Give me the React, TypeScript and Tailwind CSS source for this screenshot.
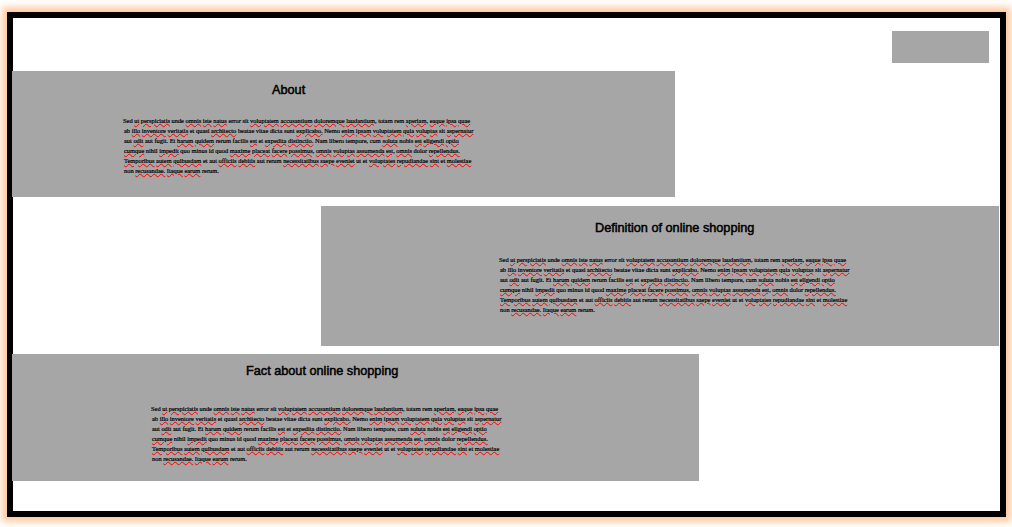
const lines = [
  "Sed ~ut ~perspiciatis unde ~omnis ~iste ~natus error sit ~voluptatem ~accusantium ~doloremque ~laudantium, totam rem ~aperiam, ~eaque ~ipsa ~quae",
  "ab ~illo ~inventore ~veritatis et quasi ~architecto beatae vitae dicta sunt ~explicabo. Nemo ~enim ~ipsam ~voluptatem ~quia ~voluptas sit ~aspernatur",
  "aut ~odit aut fugit. Et ~harum ~quidem rerum facilis ~est et ~expedita ~distinctio. Nam libero tempore, cum ~soluta nobis ~est ~eligendi ~optio",
  "~cumque nihil ~impedit quo minus id quod ~maxime ~placeat ~facere ~possimus, ~omnis ~voluptas ~assumenda ~est, ~omnis dolor ~repellendus.",
  "~Temporibus ~autem ~quibusdam et aut ~officiis ~debitis aut rerum ~necessitatibus ~saepe ~eveniet ut et ~voluptates ~repudiandae ~sint et ~molestiae",
  "non ~recusandae. ~Itaque ~earum rerum.",
];

function Paragraph() {
  return (
    <div className="w-[360px] font-['Liberation_Serif',serif] text-[6.4px] leading-[10px] text-black [-webkit-text-stroke:0.2px_black]">
      {lines.map((line, i) => (
        <p key={i} className={i === 0 ? "whitespace-nowrap" : "whitespace-nowrap pl-px"}>
          {line.split(" ").map((word, j) => (
            <span key={j}>
              {word.startsWith("~") ? (
                <span className="underline decoration-wavy decoration-[#ff0000] decoration-1 underline-offset-0">
                  {word.slice(1)}
                </span>
              ) : (
                word
              )}{" "}
            </span>
          ))}
        </p>
      ))}
    </div>
  );
}

function Title({ children }: { children: string }) {
  return (
    <h2 className="font-['Liberation_Sans',sans-serif] text-[12.7px] leading-[16px] font-normal text-black [-webkit-text-stroke:0.5px_black]">
      {children}
    </h2>
  );
}

export default function App() {
  return (
    <div className="h-[527px] w-[1012px] overflow-hidden bg-white pl-[7px] pt-[12px]">
      <div className="h-[505px] w-[999px] border-[6px] border-black bg-white shadow-[0_0_7px_5px_#ffc9a0]">
        <div className="-ml-px flex flex-col">
          <div className="flex justify-end pr-[11px] pt-[13px]">
            <div className="h-[32px] w-[97px] bg-[#a6a6a6]" />
          </div>
          <section className="mt-[8px] h-[126px] w-[663px] bg-[#a6a6a6] pt-[11px]">
            <div className="ml-[260px]">
              <Title>About</Title>
            </div>
            <div className="ml-[111px] mt-[18px]">
              <Paragraph />
            </div>
          </section>
          <section className="ml-[309px] mt-[9px] h-[140px] w-[678px] bg-[#a6a6a6] pt-[14px]">
            <div className="ml-[274px]">
              <Title>Definition of online shopping</Title>
            </div>
            <div className="ml-[178px] mt-[19px]">
              <Paragraph />
            </div>
          </section>
          <section className="mt-[8px] h-[127px] w-[687px] bg-[#a6a6a6] pt-[9px]">
            <div className="ml-[234px]">
              <Title>Fact about online shopping</Title>
            </div>
            <div className="ml-[139px] mt-[25px]">
              <Paragraph />
            </div>
          </section>
        </div>
      </div>
    </div>
  );
}
